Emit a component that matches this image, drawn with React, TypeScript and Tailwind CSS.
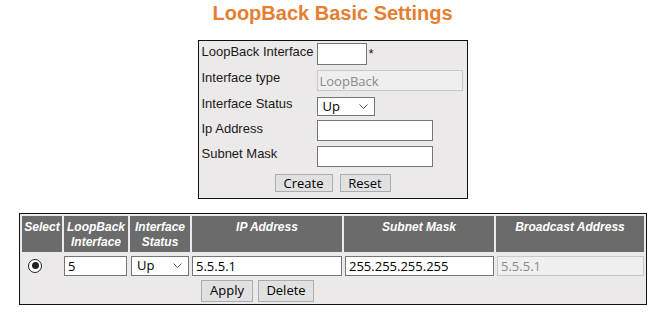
const inputFont = "font-['Open_Sans','Noto_Sans',sans-serif] text-[13px]"

function Chevron() {
	return (
		<svg width="9" height="5" viewBox="0 0 9 5" className="shrink-0">
			<path d="M0.5 0.5 L4.5 4.5 L8.5 0.5" fill="none" stroke="#555" strokeWidth="1" />
		</svg>
	)
}

function FakeSelect({ className }: { className: string }) {
	return (
		<div
			className={`flex items-center justify-between border border-[#767676] bg-white pl-[5px] pr-[6px] leading-none text-black ${inputFont} ${className}`}
		>
			<span>Up</span>
			<Chevron />
		</div>
	)
}

function TextBox({ value = '', className }: { value?: string; className: string }) {
	return (
		<input
			defaultValue={value}
			className={`border border-[#767676] bg-white px-[3px] text-black outline-none ${inputFont} ${className}`}
		/>
	)
}

function Btn({ label, className }: { label: string; className: string }) {
	return (
		<button
			className={`flex items-center justify-center border border-[#adadad] bg-[#e1e1e1] leading-none text-black ${inputFont} ${className}`}
		>
			{label}
		</button>
	)
}

function CreateForm() {
	const rows = [
		{ label: 'LoopBack Interface', h: 'h-[22px]' },
		{ label: 'Interface type', h: 'h-[22px]' },
		{ label: 'Interface Status', h: 'h-[21px]' },
		{ label: 'Ip Address', h: 'h-[21px]' },
		{ label: 'Subnet Mask', h: 'h-[22px]' }
	]

	const fields = [
		<div key="lb" className="flex items-start">
			<TextBox className="h-[22px] w-[50px]" />
			<span className="ml-[2px] mt-[3px] leading-[16px]">*</span>
		</div>,
		<input
			key="type"
			disabled
			defaultValue="LoopBack"
			className={`h-[21px] w-[146px] border border-[#c8c8c8] bg-[#efefef] px-[2px] text-[#8a8a8a] ${inputFont}`}
		/>,
		<FakeSelect key="st" className="h-[19px] w-[58px]" />,
		<TextBox key="ip" className="h-[21px] w-[116px]" />,
		<TextBox key="mask" className="h-[21px] w-[116px]" />
	]

	return (
		<div className="mx-auto mt-[15px] flex w-[270px] flex-col gap-[4px] border border-[#111] bg-[#ebe9e9] px-[3px] pb-[6px] pt-[2px]">
			{rows.map((row, i) => (
				<div key={row.label} className={`flex items-end ${row.h}`}>
					<div className="w-[115px] self-start pt-[1px] leading-[16px]">{row.label}</div>
					{fields[i]}
				</div>
			))}
			<div className="mt-[3px] flex justify-center gap-[7px]">
				<Btn label="Create" className="h-[18px] w-[58px]" />
				<Btn label="Reset" className="h-[18px] w-[51px]" />
			</div>
		</div>
	)
}

const headers = [
	['Select'],
	['LoopBack', 'Interface'],
	['Interface', 'Status'],
	['IP Address'],
	['Subnet Mask'],
	['Broadcast Address']
]

function LoopbackTable() {
	return (
		<div className="ml-[9px] mt-[14px] grid w-fit grid-cols-[40px_64px_60px_150px_150px_148px] gap-[2px] border border-[#111] bg-[#ebe9e9] p-[2px]">
			{headers.map((lines, i) => (
				<div
					key={i}
					className="h-[36px] bg-[#6b6b6b] pt-[4px] text-center text-[12px] font-bold italic leading-[15px] text-white"
				>
					{lines.map((l) => (
						<div key={l}>{l}</div>
					))}
				</div>
			))}

			<div className="flex h-[23px] items-center">
				<div className="ml-[6px] flex h-[14px] w-[14px] items-center justify-center rounded-full border-[1.5px] border-[#222] bg-white">
					<div className="h-[7px] w-[7px] rounded-full bg-[#222]" />
				</div>
			</div>
			<div className="flex h-[23px] items-center">
				<TextBox value="5" className="h-[20px] w-[63px]" />
			</div>
			<div className="flex h-[23px] items-center">
				<FakeSelect className="ml-[1px] h-[20px] w-[58px]" />
			</div>
			<div className="flex h-[23px] items-center">
				<TextBox value="5.5.5.1" className="h-[20px] w-[150px]" />
			</div>
			<div className="flex h-[23px] items-center">
				<TextBox value="255.255.255.255" className="ml-[1px] h-[20px] w-[149px]" />
			</div>
			<div className="flex h-[23px] items-center">
				<input
					disabled
					defaultValue="5.5.5.1"
					className={`ml-[1px] h-[20px] w-[147px] border border-[#c8c8c8] bg-[#efefef] px-[3px] text-[#8a8a8a] ${inputFont}`}
				/>
			</div>

			<div className="col-span-6 flex h-[23px] items-center gap-[5px] pl-[179px]">
				<Btn label="Apply" className="h-[22px] w-[52px]" />
				<Btn label="Delete" className="h-[22px] w-[56px]" />
			</div>
		</div>
	)
}

export default function App() {
	return (
		<div className="min-h-screen bg-white pl-[10px] font-['Liberation_Sans',Arial,sans-serif] text-[13px] text-[#1a1a1a]">
			<h1 className="pt-[2px] text-center text-[20px] font-bold leading-[23px] text-[#e67e30]">
				LoopBack Basic Settings
			</h1>
			<CreateForm />
			<LoopbackTable />
		</div>
	)
}
